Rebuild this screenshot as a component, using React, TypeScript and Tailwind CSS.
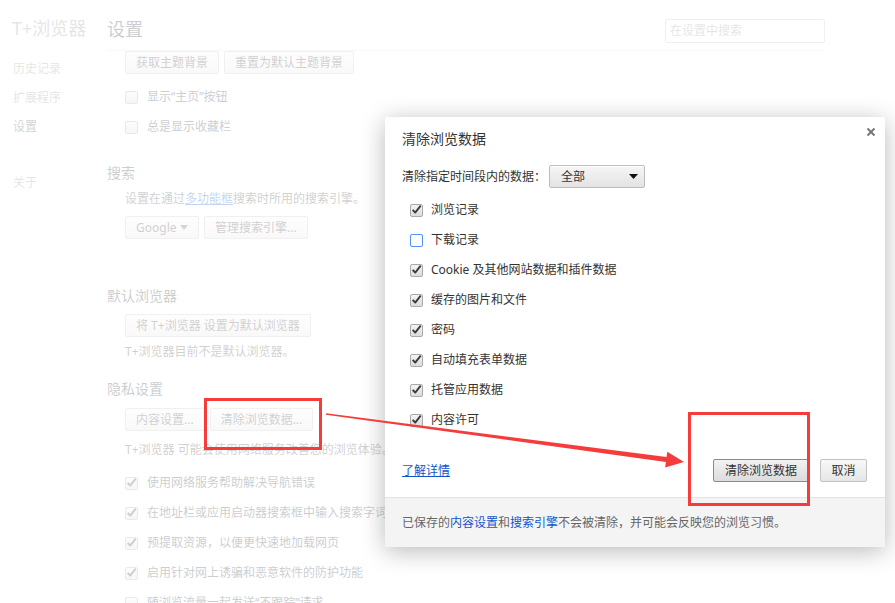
import type { ReactNode } from "react";

const Box = ({ checked, focus }: { checked?: boolean; focus?: boolean }) => (
    <span
        className={
            focus
                ? "flex size-[13px] shrink-0 items-center justify-center rounded-[2px] border border-[#4d90fe] bg-white"
                : "flex size-[13px] shrink-0 items-center justify-center rounded-[2px] border border-[#a9a9a9] bg-linear-to-b from-[#f4f4f4] to-[#dcdcdc]"
        }
    >
        {checked ? (
            <svg viewBox="0 0 12 12" className="size-[11px] -translate-y-[1px]">
                <path d="M1.8 6.4 L4.6 9.3 L10.6 1.8" fill="none" stroke="#3c3c3c" strokeWidth="2.1" strokeLinejoin="round" />
            </svg>
        ) : null}
    </span>
);

const Btn = ({ children, dark }: { children: ReactNode; dark?: boolean }) => (
    <span
        className={
            dark
                ? "inline-flex h-[23px] items-center rounded-[2px] border border-[#8a8a8a] bg-linear-to-b from-[#f2f2f2] to-[#dcdcdc] px-[11px] text-[12px] text-[#333]"
                : "inline-flex h-[23px] items-center rounded-[2px] border border-[#c2c2c2] bg-linear-to-b from-[#f8f8f8] to-[#e6e6e6] px-[10px] text-[12px] text-[#444]"
        }
    >
        {children}
    </span>
);

const Row = ({ checked, children, className }: { checked?: boolean; children: ReactNode; className: string }) => (
    <div className={"flex h-[20px] items-center gap-[9px] whitespace-nowrap text-[12px] text-[#303942] " + className}>
        <Box checked={checked} />
        <span>{children}</span>
    </div>
);

const dialogItems: [string, boolean][] = [
    ["浏览记录", true],
    ["下载记录", false],
    ["Cookie 及其他网站数据和插件数据", true],
    ["缓存的图片和文件", true],
    ["密码", true],
    ["自动填充表单数据", true],
    ["托管应用数据", true],
    ["内容许可", true]
];

export default function App() {
    return (
        <div className="relative h-[603px] w-[895px] overflow-hidden bg-white font-['Noto_Sans','Noto_Sans_CJK_SC',sans-serif] leading-none">
            {/* settings page behind the dialog */}
            <div className="flex">
                <nav className="w-[107px] shrink-0 text-[12px] text-[#999]">
                    <div className="mt-[16px] h-[24px] pl-[12px] text-[18px] leading-[24px] text-[#999]">T+浏览器</div>
                    <div className="mt-[19px] pl-[13px] leading-[20px]">历史记录</div>
                    <div className="mt-[9px] pl-[13px] leading-[20px]">扩展程序</div>
                    <div className="mt-[9px] pl-[13px] leading-[20px] text-[#464e5a]">设置</div>
                    <div className="mt-[36px] pl-[13px] leading-[20px]">关于</div>
                </nav>

                <main className="flex-1">
                    <header className="flex h-[51px] w-[718px] items-start justify-between border-b border-[#e4e4e4]">
                        <h1 className="mt-[17px] text-[18px] leading-[24px] text-[#303942]">设置</h1>
                        <div className="mt-[19px] flex h-[24px] w-[160px] items-center rounded-[2px] border border-[#bfbfbf] px-[4px] text-[12px] text-[#999]">
                            在设置中搜索
                        </div>
                    </header>

                    <div className="pl-[18px] text-[12px] text-[#303942]">
                        <div className="flex gap-[5px]">
                            <Btn>获取主题背景</Btn>
                            <Btn>重置为默认主题背景</Btn>
                        </div>
                        <Row className="mt-[13px]">显示“主页”按钮</Row>
                        <Row className="mt-[10px]">总是显示收藏栏</Row>

                        <h2 className="-ml-[18px] mt-[26px] text-[14px] leading-[20px]">搜索</h2>
                        <p className="mt-[7px] leading-[18px] text-[#444]">
                            设置在通过<span className="text-[#15c] underline">多功能框</span>搜索时所用的搜索引擎。
                        </p>
                        <div className="mt-[8px] flex gap-[5px]">
                            <span className="inline-flex h-[23px] w-[74px] items-center justify-between rounded-[2px] border border-[#c2c2c2] bg-linear-to-b from-[#f8f8f8] to-[#e6e6e6] px-[10px] text-[12px] text-[#444]">
                                Google
                                <svg viewBox="0 0 8 5" className="w-[8px]">
                                    <path d="M0 0 H8 L4 5 Z" fill="#555" />
                                </svg>
                            </span>
                            <Btn>管理搜索引擎...</Btn>
                        </div>

                        <h2 className="-ml-[18px] mt-[47px] text-[14px] leading-[20px]">默认浏览器</h2>
                        <div className="mt-[8px] flex">
                            <Btn>将 T+浏览器 设置为默认浏览器</Btn>
                        </div>
                        <p className="mt-[6px] leading-[18px] text-[#444]">T+浏览器目前不是默认浏览器。</p>

                        <h2 className="-ml-[18px] mt-[18px] text-[14px] leading-[20px]">隐私设置</h2>
                        <div className="mt-[9px] flex gap-[5px]">
                            <Btn>内容设置...</Btn>
                            <Btn>清除浏览数据...</Btn>
                        </div>
                        <p className="mt-[10px] whitespace-nowrap leading-[18px] text-[#444]">
                            T+浏览器 可能会使用网络服务改善您的浏览体验。您可以视情况停用这些服务。
                        </p>
                        <Row checked className="mt-[14px]">使用网络服务帮助解决导航错误</Row>
                        <Row checked className="mt-[10px]">在地址栏或应用启动器搜索框中输入搜索字词和网址时，使用联想查询服务帮助完成相关操作</Row>
                        <Row checked className="mt-[10px]">预提取资源，以便更快速地加载网页</Row>
                        <Row checked className="mt-[10px]">启用针对网上诱骗和恶意软件的防护功能</Row>
                        <Row className="mt-[10px]">随浏览流量一起发送“不跟踪”请求</Row>
                    </div>
                </main>
            </div>

            {/* fade overlay */}
            <div className="absolute inset-0 bg-white/75" />

            {/* dialog */}
            <div className="absolute left-[385px] top-[117px] flex h-[430px] w-[500px] flex-col rounded-[2px] bg-white text-[12px] text-[#333] shadow-[0_4px_24px_rgba(0,0,0,0.28)]">
                <div className="flex items-start justify-between pl-[17px] pr-[9px] pt-[12px]">
                    <h3 className="text-[14px] leading-[20px] text-[#333]">清除浏览数据</h3>
                    <svg viewBox="0 0 10 10" className="-mt-[2px] size-[10px]">
                        <path d="M1.5 1.5 L8.5 8.5 M8.5 1.5 L1.5 8.5" stroke="#777" strokeWidth="2" />
                    </svg>
                </div>

                <div className="mt-[16px] flex items-center pl-[17px]">
                    <span className="w-[147px] leading-[20px]">清除指定时间段内的数据：</span>
                    <span className="flex h-[23px] w-[96px] items-center justify-between rounded-[2px] border border-[#bdbdbd] bg-linear-to-b from-[#f6f6f6] to-[#e3e3e3] pl-[11px] pr-[6px] shadow-[inset_0_1px_0_#fff]">
                        全部
                        <svg viewBox="0 0 9 5" className="w-[9px]">
                            <path d="M0 0 H9 L4.5 5 Z" fill="#111" />
                        </svg>
                    </span>
                </div>

                <div className="mt-[12px] flex flex-col gap-[10px] pl-[25px]">
                    {dialogItems.map(([label, checked], i) => (
                        <div key={label} className="flex h-[20px] items-center gap-[8px]">
                            <Box checked={checked} focus={i === 1} />
                            <span className="leading-[20px]">{label}</span>
                        </div>
                    ))}
                </div>

                <div className="mt-[29px] flex h-[23px] items-center justify-between pl-[17px] pr-[18px]">
                    <span className="leading-[20px] text-[#15c] underline">了解详情</span>
                    <div className="flex gap-[11px]">
                        <Btn dark>清除浏览数据</Btn>
                        <span className="inline-flex h-[23px] w-[47px] items-center justify-center rounded-[2px] border border-[#c2c2c2] bg-linear-to-b from-[#f8f8f8] to-[#e6e6e6] text-[12px] text-[#333]">
                            取消
                        </span>
                    </div>
                </div>

                <div className="mt-[15px] flex flex-1 items-center rounded-b-[2px] border-t border-[#e3e3e3] bg-[#f4f4f4] pl-[17px] text-[#666]">
                    <p className="leading-[20px]">
                        已保存的<span className="text-[#15c]">内容设置</span>和<span className="text-[#15c]">搜索引擎</span>不会被清除，并可能会反映您的浏览习惯。
                    </p>
                </div>
            </div>

            {/* red annotations */}
            <svg className="pointer-events-none absolute inset-0" width="895" height="603" viewBox="0 0 895 603">
                <rect x="205.5" y="399.5" width="115" height="49" fill="none" stroke="#f63b3b" strokeWidth="3" />
                <rect x="689.5" y="413.5" width="119" height="91" fill="none" stroke="#f63b3b" strokeWidth="3" />
                <polygon
                    points="326.1,413.3 666.5,457.1 667.3,451.7 684,462 665.1,467.5 665.9,462.1 325.9,414.7"
                    fill="#f63b3b"
                />
            </svg>
        </div>
    );
}
